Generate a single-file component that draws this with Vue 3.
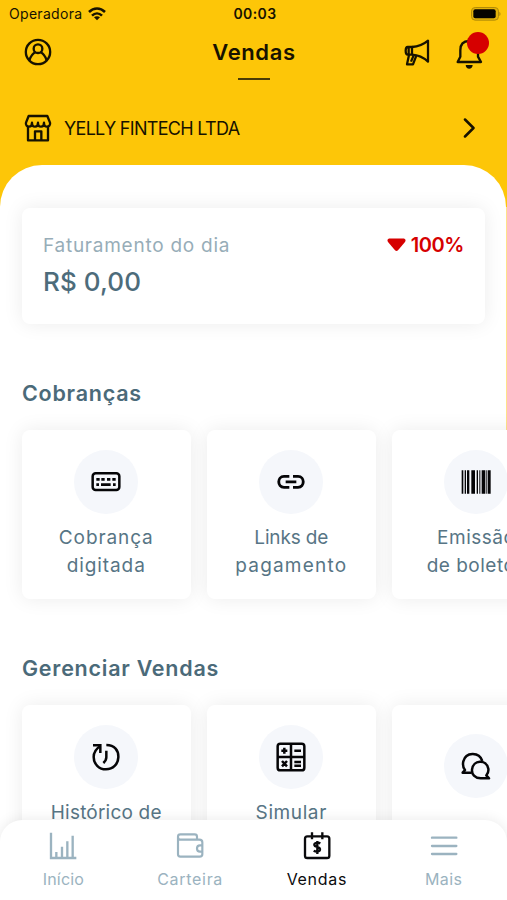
<script setup>
const charges = [
  { icon: 'keyboard', lines: [{ text: 'Cobrança', track: 0.9 }, { text: 'digitada', track: 0.9 }] },
  { icon: 'link', lines: [{ text: 'Links de', track: -0.15 }, { text: 'pagamento', track: 1.2 }] },
  { icon: 'barcode', lines: [{ text: 'Emissão', track: 0.5 }, { text: 'de boletos', track: 0.5 }] },
]
const management = [
  { icon: 'history', lines: [{ text: 'Histórico de', track: 0.2 }, { text: 'vendas', track: 0.6 }] },
  { icon: 'calculator', lines: [{ text: 'Simular', track: 0.6 }, { text: 'vendas', track: 0.6 }] },
  { icon: 'chat', lines: [] },
]
const sections = [
  { title: 'Cobranças', cls: 'charges', items: charges },
  { title: 'Gerenciar Vendas', cls: 'management', items: management },
]
const tabs = [
  { icon: 'chart', label: 'Início' },
  { icon: 'wallet', label: 'Carteira' },
  { icon: 'sales', label: 'Vendas', active: true },
  { icon: 'menu', label: 'Mais' },
]
</script>

<template>
  <div class="screen">
    <header class="header">
      <div class="status">
        <div class="carrier">
          <span class="operator">Operadora</span>
          <svg class="wifi" viewBox="0 0 54 40" fill="none" stroke="#171200" stroke-width="7.500">
            <path d="M3 14C17 0 37 0 51 14" />
            <path d="M12 25C21 16 33 16 42 25" />
            <path d="M27 39L18 30C23 26 31 26 36 30Z" fill="#171200" stroke="none" />
          </svg>
        </div>
        <span class="clock">00:03</span>
        <svg class="battery" viewBox="0 0 90 42">
          <rect x="1.5" y="1.5" width="81" height="38" rx="11" fill="#e3b30a" stroke="#b28c08" stroke-width="3" />
          <rect x="7" y="7" width="67" height="27" rx="6" fill="#050400" />
          <path d="M85 14C90 17 90 24 85 27Z" fill="#b28c08" />
        </svg>
      </div>

      <div class="titlebar">
        <svg class="ic" viewBox="0 0 84 84" fill="none" stroke="#171200" stroke-width="7">
          <circle cx="42" cy="42" r="36.5" />
          <circle cx="42" cy="32" r="13" />
          <path d="M16 67C20 54 27 46 35 42M68 67C64 54 57 46 49 42" />
        </svg>
        <h1 class="title">Vendas</h1>
        <div class="actions">
          <svg class="ic" viewBox="0 0 84 84" fill="none" stroke="#171200" stroke-width="6.800" stroke-linejoin="round">
            <path d="M27 27H14C9 27 8 32 8 38S9 50 14 50H27ZM17 28V50" />
            <path d="M27 27C46 26 61 20 75 8V71C61 58 46 51 27 50" />
            <path d="M18 51L12 79H30L40 53M32 52L24 71" />
          </svg>
          <div class="bell">
            <svg viewBox="0 0 84 93" fill="none" stroke="#171200" stroke-width="7" stroke-linejoin="round">
              <path d="M42 1V8" />
              <path d="M8 72H78L69 56V37C69 20 59 9 42 9S16 20 16 37V56Z" />
              <path d="M32 81H53C53 88 48 92 42.500 92S32 88 32 81Z" fill="#171200" stroke="none" />
            </svg>
            <span class="badge"></span>
          </div>
        </div>
      </div>

      <div class="company">
        <svg class="ic" viewBox="0 0 84 84" fill="none" stroke="#171200" stroke-width="7" stroke-linejoin="round">
          <path d="M14 6H70L78 26C80 33 75 38 69 38S60 34 60 26C60 34 57 38 51 38S42 34 42 26C42 34 39 38 33 38S24 34 24 26C24 34 21 38 15 38S4 33 6 26Z" />
          <path d="M12 37V79H72V37M33 78V52H52V78" />
        </svg>
        <span class="company-name">YELLY FINTECH LTDA</span>
        <svg class="chevron" viewBox="0 0 12 20" fill="none" stroke="#171200" stroke-width="2.500" stroke-linecap="round" stroke-linejoin="round">
          <path d="M2 1.500L10.500 10L2 18.500" />
        </svg>
      </div>
    </header>

    <main class="sheet">
      <section class="summary">
        <div class="summary-top">
          <span class="summary-label">Faturamento do dia</span>
          <span class="variation">
            <svg viewBox="0 0 19 14" fill="#d60000"><path d="M2 .5H17Q19.500 1.500 18 4L11 12.300Q9.500 13.800 8 12.300L1 4Q-.5 1.500 2 .5Z" /></svg>
            <b>100%</b>
          </span>
        </div>
        <div class="amount">R$ 0,00</div>
      </section>

      <section v-for="s in sections" :key="s.title" class="group" :class="s.cls">
        <h2>{{ s.title }}</h2>
        <div class="cards">
          <article v-for="item in s.items" :key="item.icon" class="card" :class="item.icon">
            <div class="disc">
              <svg v-if="item.icon === 'keyboard'" viewBox="0 0 96 96" fill="none" stroke="#050507" stroke-width="7.500">
                <rect x="8" y="22" width="80" height="50" rx="9" />
                <path d="M19 40H29M34 40H44M51 40H61M67 40H77M19 56H27M33 56H62M69 56H77" stroke-width="8" />
              </svg>
              <svg v-else-if="item.icon === 'link'" viewBox="0 0 96 96" fill="none" stroke="#050507" stroke-width="8.500">
                <path d="M43 31H27C6 31 6 64 27 64H43M54 31H69C90 31 90 64 69 64H54M32 47.500H64" />
              </svg>
              <svg v-else-if="item.icon === 'barcode'" viewBox="0 0 96 96" fill="#050507">
                <path d="M5 13h5v70h-5zM14 13h4v70h-4zM21 13h7v70h-7zM34 13h11v70h-11zM50 13h4v70h-4zM58 13h3v70h-3zM65 13h11v70h-11zM79 13h3v70h-3zM84 13h8v70h-8z" />
              </svg>
              <svg v-else-if="item.icon === 'history'" viewBox="0 0 96 96" fill="none" stroke="#050507" stroke-width="7.500">
                <path d="M49 12C74 12 86 29 85 49C84 70 69 85 48 85S11 69 11 48C11 34 17 24 31 15" />
                <path d="M9 13H31V36" />
                <path d="M49 29V49C49 55 47 60 40 66" />
              </svg>
              <svg v-else-if="item.icon === 'calculator'" viewBox="0 0 96 96" fill="none" stroke="#050507" stroke-width="7.500">
                <rect x="8" y="8" width="80" height="80" rx="8" />
                <path d="M48 8V88M8 48H88M19 29H37M28 20V38M58 29H78M21 60L36 76M36 60L21 76M58 63H78M58 74H78" />
              </svg>
              <svg v-else viewBox="0 0 96 96" fill="none" stroke="#050507" stroke-width="7.500" stroke-linejoin="round">
                <path d="M35 68H8L15 60C8 52 8 43 10 34C17 6 57 4 67 33" />
                <path d="M87 85H62C44 84 35 73 36 59C39 29 79 27 85 56C86 64 84 71 79 76Z" />
              </svg>
            </div>
            <p v-if="item.lines.length">
              <span v-for="line in item.lines" :key="line.text" :style="{ letterSpacing: line.track + 'px' }">{{ line.text }}</span>
            </p>
          </article>
        </div>
      </section>
    </main>

    <nav class="tabs">
      <div v-for="t in tabs" :key="t.icon" class="tab" :class="[t.icon, { active: t.active }]">
        <svg v-if="t.icon === 'chart'" viewBox="0 0 84 84" fill="none" stroke="currentColor" stroke-width="7">
          <path d="M6 2V78H82M22 78V60M39 78V44M55 78V28M71 78V11" />
        </svg>
        <svg v-else-if="t.icon === 'wallet'" viewBox="0 0 84 84" fill="none" stroke="currentColor" stroke-width="6.500" stroke-linejoin="round">
          <path d="M63 23V14Q63 7 56 7H13Q6 7 6 14V67Q6 74 13 74H71Q79 74 79 67V31Q79 23 70 23H13Q6 23 6 15" />
          <path d="M80 40H72C60 40 60 59 72 59H80" />
        </svg>
        <svg v-else-if="t.icon === 'sales'" viewBox="0 0 84 84" fill="none" stroke="currentColor" stroke-width="7">
          <rect x="6" y="13" width="73" height="65" rx="7" />
          <path d="M27 1V22M58 1V22" />
          <path d="M52 34C46 31 33 31 34 39C35 47 52 43 51 53C50 60 39 60 32 56M43 27V66" />
        </svg>
        <svg v-else viewBox="0 0 84 84" fill="none" stroke="currentColor" stroke-width="7" stroke-linecap="round">
          <path d="M6 17H79M6 42H79M6 66H79" />
        </svg>
        <span>{{ t.label }}</span>
      </div>
    </nav>
  </div>
</template>

<style>
body { margin: 0; overflow: hidden; }
</style>

<style scoped>
.screen {
  position: relative;
  width: 507px;
  height: 900px;
  overflow: hidden;
  background: linear-gradient(#fdc608 207px, #ffe28a 207px, #ffe28a 430px, #fff 430px);
  font-family: Inter, "Open Sans", sans-serif;
  color: #171200;
}
svg { display: block; flex: none; }
.header { height: 165px; }
.status {
  display: grid;
  grid-template-columns: 1fr auto 1fr;
  align-items: center;
  height: 27px;
  padding: 0 6px 0 9px;
}
.carrier { display: flex; align-items: center; gap: 6px; }
.operator { font-size: 14px; letter-spacing: 0.3px; }
.wifi { width: 18px; height: 14px; }
.clock { font-size: 14px; font-weight: 600; letter-spacing: 0.4px; }
.battery { width: 30px; height: 14px; justify-self: end; }
.titlebar {
  display: grid;
  grid-template-columns: 1fr auto 1fr;
  align-items: start;
  height: 54px;
  padding: 0 23px 0 24px;
}
.ic { width: 28px; height: 28px; }
.titlebar > .ic { margin-top: 11px; }
.title {
  display: flex;
  flex-direction: column;
  align-items: center;
  margin: 0;
  padding-top: 12px;
  font-size: 22px;
  font-weight: 600;
  line-height: 26px;
  letter-spacing: 0.6px;
}
.title::after {
  content: "";
  width: 32px;
  height: 2px;
  margin-top: 13px;
  background: #4b3b05;
}
.actions { display: flex; justify-content: flex-end; align-items: center; gap: 24px; padding-top: 11px; }
.bell { position: relative; width: 29px; height: 28px; }
.bell svg { width: 28px; height: 31px; }
.badge {
  position: absolute;
  left: 12px;
  top: -6px;
  width: 22px;
  height: 22px;
  border-radius: 50%;
  background: #d60000;
}
.company { display: flex; align-items: center; height: 94px; padding: 0 32px 0 24px; }
.company-name { flex: 1; margin-left: 12px; font-size: 18px; letter-spacing: -0.7px; }
.chevron { width: 12px; height: 20px; }

.sheet {
  box-sizing: border-box;
  height: 735px;
  margin-right: 1px;
  padding: 43px 21px 0 22px;
  border-radius: 42px 42px 0 0;
  background: #fff;
}
.summary {
  box-sizing: border-box;
  height: 116px;
  padding: 22px 21px 0 21px;
  border-radius: 8px;
  background: #fff;
  box-shadow: 0 0 20px rgba(0, 0, 0, 0.08);
}
.summary-top { display: flex; justify-content: space-between; align-items: center; height: 30px; }
.summary-label { font-size: 19px; letter-spacing: 0.75px; color: #97adb8; }
.variation { display: flex; align-items: center; gap: 5px; color: #d60000; font-size: 20px; }
.variation b { font-weight: 600; letter-spacing: -0.4px; }
.variation svg { width: 19px; height: 14px; }
.amount { font-size: 26px; line-height: 43px; font-weight: 500; letter-spacing: 0.1px; color: #4d6c7b; }

.group h2 {
  margin: 0;
  font-size: 21.5px;
  line-height: 30px;
  font-weight: 600;
  letter-spacing: 0.75px;
  color: #4b6a79;
}
.charges { padding-top: 54px; }
.management { padding-top: 54px; }
.cards { display: flex; gap: 16.5px; padding-top: 22px; }
.card {
  box-sizing: border-box;
  flex: none;
  display: flex;
  flex-direction: column;
  align-items: center;
  width: 168.5px;
  height: 169px;
  padding-top: 20px;
  border-radius: 8px;
  background: #fff;
  box-shadow: 0 0 20px rgba(0, 0, 0, 0.08);
}
.card.chat { padding-top: 29px; }
.disc {
  display: flex;
  align-items: center;
  justify-content: center;
  width: 64px;
  height: 64px;
  border-radius: 50%;
  background: #f5f7fb;
}
.disc svg { width: 32px; height: 32px; }
.card p {
  display: flex;
  flex-direction: column;
  align-items: center;
  margin: 10px 0 0;
  font-size: 19px;
  line-height: 28px;
  color: #577585;
  white-space: nowrap;
}

.tabs {
  position: absolute;
  left: 0;
  bottom: 0;
  box-sizing: border-box;
  display: flex;
  width: 507px;
  height: 80px;
  padding-top: 12px;
  border-radius: 22px 22px 0 0;
  background: #fff;
  box-shadow: 0 0 14px rgba(0, 0, 0, 0.09);
}
.tab { flex: 1; display: flex; flex-direction: column; align-items: center; color: #9bb3c0; }
.tab svg { width: 28px; height: 28px; }
.tab span { margin-top: 8px; font-size: 16px; line-height: 22px; letter-spacing: 0.2px; }
.tab.wallet span, .tab.sales span { letter-spacing: 0.7px; }
.tab.menu span { letter-spacing: 0.4px; }
.tab.active { color: #0b0b0d; }
</style>
